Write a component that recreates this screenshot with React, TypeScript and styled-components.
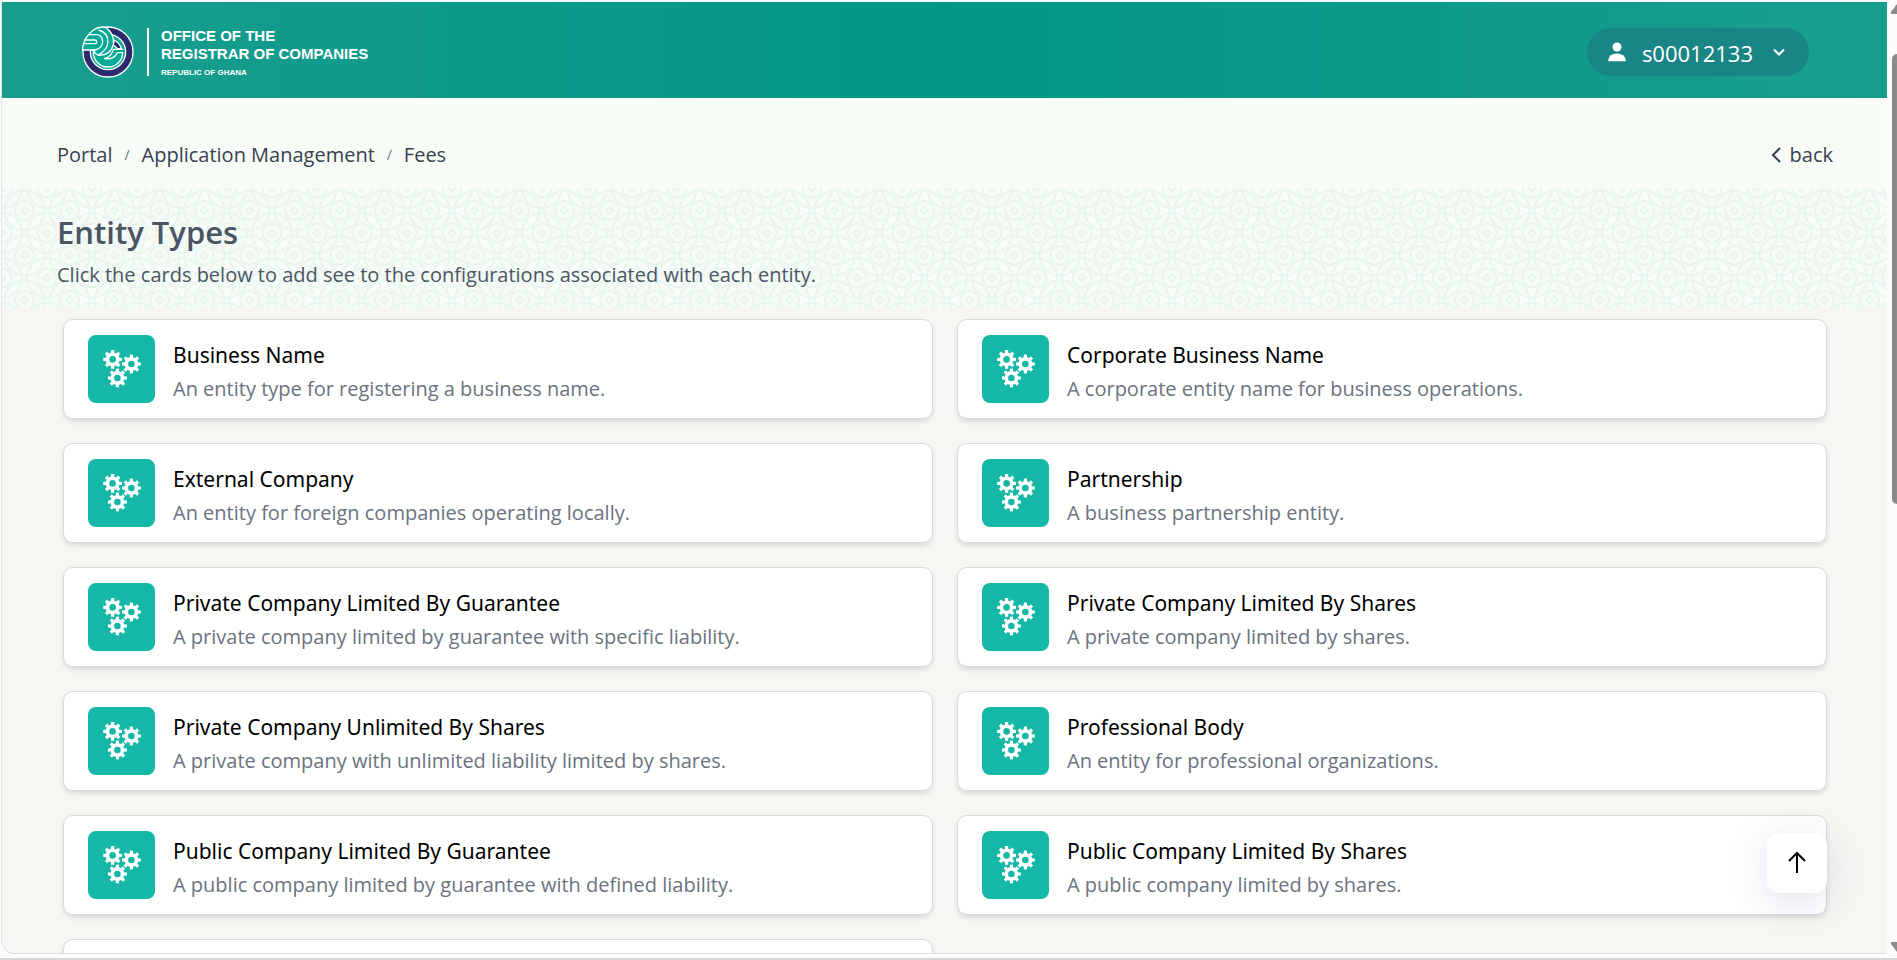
import React from "react";
import styled, { createGlobalStyle } from "styled-components";

const GlobalStyle = createGlobalStyle`
  *, *::before, *::after { box-sizing: border-box; }
  html, body, #root { height: 100%; }
  body {
    margin: 0;
    overflow: hidden;
    background: #fcfcfc;
    font-family: "Open Sans", "Noto Sans", sans-serif;
    color: #374151;
  }
  h1, h2, p, ol, ul { margin: 0; padding: 0; font-weight: 400; }
  ol, ul { list-style: none; }
  a { color: inherit; text-decoration: none; }
  button { font: inherit; border: 0; cursor: pointer; }
`;

const Window = styled.div`
  display: flex;
  height: 100vh;
  padding: 2px 0 4px 1px;
  border-bottom: 2px solid #d6d6d6;
`;

const Frame = styled.div`
  position: relative;
  flex: 1;
  display: flex;
  flex-direction: column;
  min-width: 0;
  overflow: hidden;
  background: #f7f6f2;
  border-left: 1px solid #e5e5ea;
  border-bottom: 1px solid #dcdcdf;
  border-bottom-left-radius: 14px;
`;

const Scrollbar = styled.div`
  display: flex;
  flex-direction: column;
  align-items: flex-end;
  width: 10px;
  flex: none;
  overflow: hidden;
`;

const Arrow = styled.svg`
  display: block;
  flex: none;
  width: 6px;
  height: 12px;
  fill: #8b8b8b;
`;

const Thumb = styled.div`
  width: 5px;
  height: 450px;
  margin: 40px 0 auto;
  background: #8b8b8b;
  border-radius: 5px 0 0 5px;
`;

const Header = styled.header`
  display: flex;
  flex: none;
  align-items: center;
  justify-content: space-between;
  height: 96px;
  padding: 4px 78px 0 80px;
  background: linear-gradient(90deg, #199e8e 0%, #029688 50%, #199e8e 100%);
`;

const Brand = styled.a`
  display: flex;
  align-items: center;
  color: #fff;
  font-family: "Liberation Sans", Arial, sans-serif;
  font-weight: 700;
`;

const LogoMark = styled.svg`
  width: 52px;
  height: 52px;
`;

const BrandText = styled.div`
  display: flex;
  flex-direction: column;
  justify-content: center;
  height: 48px;
  margin-left: 13px;
  padding-left: 12px;
  border-left: 2px solid #fff;
`;

const BrandName = styled.div`
  font-size: 15px;
  line-height: 18px;
`;

const BrandCountry = styled.div`
  margin-top: 5px;
  font-size: 8px;
  line-height: 10px;
`;

const UserButton = styled.button`
  display: flex;
  align-items: center;
  height: 48px;
  padding: 0 20px;
  border-radius: 24px;
  background: #1a8585;
  color: #fff;
  font-size: 22px;
  line-height: 32px;
`;

const UserName = styled.span`
  margin: 2px 16px 0 15px;
`;

const TopBar = styled.div`
  display: flex;
  flex: none;
  align-items: center;
  justify-content: space-between;
  height: 90px;
  padding: 23px 54px 0 55px;
  background: #f7fcf7;
  font-size: 20px;
  line-height: 28px;
`;

const Crumbs = styled.ol`
  display: flex;
  align-items: center;
`;

const Crumb = styled.li`
  display: flex;
  align-items: center;
`;

const Slash = styled.span`
  width: 29px;
  text-align: center;
  font-size: 14px;
  line-height: 28px;
  color: #6b7280;
`;

const BackLink = styled.a`
  display: flex;
  align-items: center;
  gap: 8px;
`;

const Banner = styled.section`
  position: relative;
  flex: none;
  height: 120px;
  padding: 24px 55px 0;
  background: #f7fcf7;
  color: #4b5563;
`;

const Pattern = styled.svg`
  position: absolute;
  inset: 0;
  width: 100%;
  height: 100%;
`;

const PageTitle = styled.h1`
  position: relative;
  font-size: 31px;
  line-height: 40px;
  font-weight: 600;
`;

const PageIntro = styled.p`
  position: relative;
  margin-top: 9px;
  font-size: 20px;
  line-height: 28px;
`;

const Cards = styled.ul`
  display: grid;
  grid-template-columns: 1fr 1fr;
  gap: 24px;
  padding: 11px 60px 24px 61px;
`;

const Card = styled.a`
  display: flex;
  align-items: center;
  gap: 18px;
  height: 100px;
  padding: 0 24px;
  background: #fff;
  border: 1px solid #d8dae1;
  border-radius: 10px;
  box-shadow: 0 3px 5px rgba(0, 0, 0, 0.1);
`;

const IconTile = styled.span`
  display: flex;
  flex: none;
  align-items: center;
  justify-content: center;
  width: 67px;
  height: 68px;
  border-radius: 8px;
  background: #15b8a6;
`;

const CardBody = styled.div`
  padding-top: 6px;
`;

const CardTitle = styled.h2`
  font-family: "Noto Sans", "Open Sans", sans-serif;
  font-size: 21px;
  line-height: 33px;
  color: #000;
`;

const CardText = styled.p`
  font-size: 20px;
  line-height: 33px;
  color: #6b7280;
`;

const TopButton = styled.button`
  position: absolute;
  right: 60px;
  bottom: 60px;
  display: flex;
  align-items: center;
  justify-content: center;
  width: 60px;
  height: 60px;
  border-radius: 12px;
  background: #fff;
  box-shadow: 0 8px 40px rgba(60, 50, 130, 0.15);
`;

const entities = [
  ["Business Name", "An entity type for registering a business name."],
  ["Corporate Business Name", "A corporate entity name for business operations."],
  ["External Company", "An entity for foreign companies operating locally."],
  ["Partnership", "A business partnership entity."],
  ["Private Company Limited By Guarantee", "A private company limited by guarantee with specific liability."],
  ["Private Company Limited By Shares", "A private company limited by shares."],
  ["Private Company Unlimited By Shares", "A private company with unlimited liability limited by shares."],
  ["Professional Body", "An entity for professional organizations."],
  ["Public Company Limited By Guarantee", "A public company limited by guarantee with defined liability."],
  ["Public Company Limited By Shares", "A public company limited by shares."],
];

const crumbs = ["Portal", "Application Management", "Fees"];

function Gear({ x, y }: { x: number; y: number }) {
  return (
    <g transform={`translate(${x} ${y})`}>
      {[0, 45, 90, 135].map((a) => (
        <rect key={a} x="-1.6" y="-9.4" width="3.2" height="18.8" fill="#fff" transform={`rotate(${a})`} />
      ))}
      <circle r="5.1" fill="#15b8a6" stroke="#fff" strokeWidth="3.6" />
    </g>
  );
}

function Gears() {
  return (
    <svg width="40" height="40" viewBox="0 0 40 40" aria-hidden="true">
      <Gear x={10.6} y={10.4} />
      <Gear x={29.4} y={15} />
      <Gear x={15.4} y={29} />
    </svg>
  );
}

function Logo() {
  return (
    <LogoMark viewBox="0 0 156 156" aria-hidden="true">
      <circle cx="78" cy="78" r="75" fill="#2b2a6c" stroke="#fff" strokeWidth="4" />
      <circle cx="78" cy="78" r="53" fill="#06a896" stroke="#fff" strokeWidth="4" />
      <path d="M34 78 A44 44 0 0 0 122 80 H106 Q96 102 66 98 Q88 94 94 70 H124" fill="none" stroke="#fff" strokeWidth="4" />
      <path d="M96 42 A40 40 0 0 1 118 68 H106 Q100 60 94 58 Z" fill="#2b2a6c" stroke="#fff" strokeWidth="4" />
      <path
        d="M2 72 V64 Q6 34 34 12 Q56 -2 74 6 Q98 26 94 56 Q86 88 50 88 Q38 84 34 72 Z"
        fill="#06a896"
        stroke="#fff"
        strokeWidth="4"
      />
      <path
        d="M18 26 H46 Q62 30 62 48 Q60 66 40 72 H30 M50 12 Q78 20 78 48 Q76 72 50 86 M8 42 H38 Q44 42 44 47 Q44 53 38 53 H5"
        fill="none"
        stroke="#fff"
        strokeWidth="4"
      />
    </LogoMark>
  );
}

function Motif({ x, y }: { x: number; y: number }) {
  return (
    <g transform={`translate(${x} ${y})`}>
      <circle r="20" />
      <circle r="9.5" />
      <path d="M0 -3.5 L3.5 0 L0 3.5 L-3.5 0 Z" />
    </g>
  );
}

function BannerPattern() {
  return (
    <Pattern aria-hidden="true">
      <defs>
        <pattern id="rings" width="45" height="45" patternUnits="userSpaceOnUse">
          <g fill="none" stroke="#e9f5ef" strokeWidth="2">
            <Motif x={22.5} y={22.5} />
            <Motif x={0} y={0} />
            <Motif x={45} y={0} />
            <Motif x={0} y={45} />
            <Motif x={45} y={45} />
          </g>
        </pattern>
      </defs>
      <rect width="100%" height="100%" fill="url(#rings)" />
    </Pattern>
  );
}

export default function App() {
  return (
    <>
      <GlobalStyle />
      <Window>
        <Frame>
          <Header>
            <Brand href="#home">
              <Logo />
              <BrandText>
                <BrandName>OFFICE OF THE</BrandName>
                <BrandName>REGISTRAR OF COMPANIES</BrandName>
                <BrandCountry>REPUBLIC OF GHANA</BrandCountry>
              </BrandText>
            </Brand>
            <UserButton type="button">
              <svg width="20" height="20" viewBox="0 0 20 20" fill="#fff" aria-hidden="true">
                <circle cx="10" cy="5" r="4.5" />
                <path d="M2 19.2 Q1 19.2 1.2 18 Q2.4 11.5 10 11.5 Q17.6 11.5 18.8 18 Q19 19.2 18 19.2 Z" />
              </svg>
              <UserName>s00012133</UserName>
              <svg width="20" height="20" viewBox="0 0 20 20" fill="none" stroke="#fff" strokeWidth="2" aria-hidden="true">
                <path d="M5 7.5 L10 12.5 L15 7.5" />
              </svg>
            </UserButton>
          </Header>
          <TopBar>
            <nav aria-label="Breadcrumb">
              <Crumbs>
                {crumbs.map((name, i) => (
                  <Crumb key={name}>
                    {i > 0 && <Slash>/</Slash>}
                    <a href="#crumb">{name}</a>
                  </Crumb>
                ))}
              </Crumbs>
            </nav>
            <BackLink href="#back">
              <svg width="12" height="16" viewBox="0 0 12 16" fill="none" stroke="#374151" strokeWidth="2" aria-hidden="true">
                <path d="M10 1 L3 8 L10 15" />
              </svg>
              back
            </BackLink>
          </TopBar>
          <Banner>
            <BannerPattern />
            <PageTitle>Entity Types</PageTitle>
            <PageIntro>Click the cards below to add see to the configurations associated with each entity.</PageIntro>
          </Banner>
          <Cards>
            {entities.map(([title, text]) => (
              <li key={title}>
                <Card href="#entity">
                  <IconTile>
                    <Gears />
                  </IconTile>
                  <CardBody>
                    <CardTitle>{title}</CardTitle>
                    <CardText>{text}</CardText>
                  </CardBody>
                </Card>
              </li>
            ))}
            <li>
              <Card as="div" />
            </li>
          </Cards>
          <TopButton type="button" aria-label="Back to top">
            <svg width="20" height="24" viewBox="0 0 20 24" fill="none" stroke="#000" strokeWidth="2" aria-hidden="true">
              <path d="M10 22 V3 M2 10 L10 2 L18 10" />
            </svg>
          </TopButton>
        </Frame>
        <Scrollbar aria-hidden="true">
          <Arrow viewBox="0 0 6 12">
            <path d="M0 12 L0 10 L6 2 V12 Z" />
          </Arrow>
          <Thumb />
          <Arrow viewBox="0 0 6 12">
            <path d="M0 0 H6 V10 L0 2 Z" />
          </Arrow>
        </Scrollbar>
      </Window>
    </>
  );
}
